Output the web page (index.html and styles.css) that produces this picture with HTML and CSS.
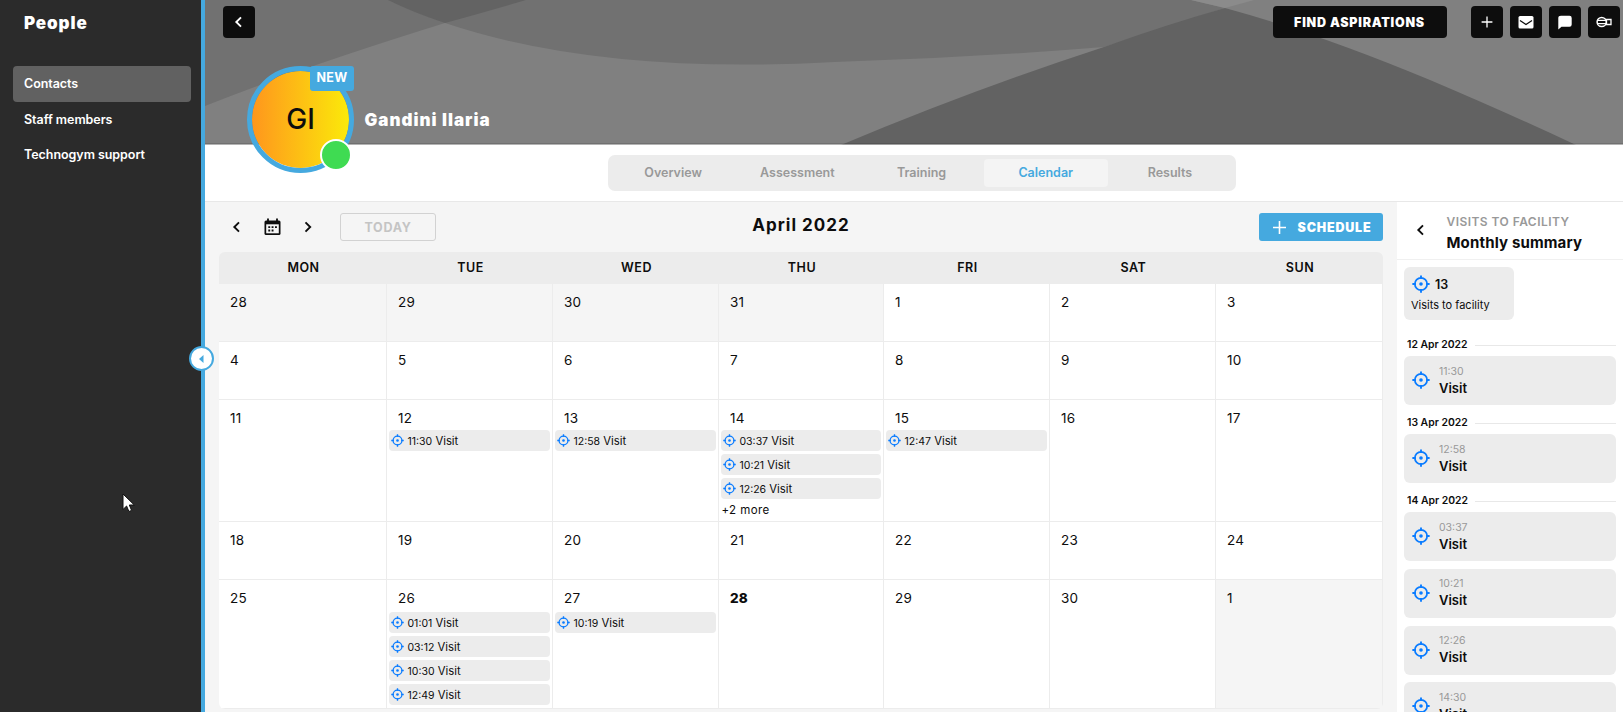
FILE: index.html
```html
<!DOCTYPE html>
<html lang="en">
<head>
<meta charset="utf-8">
<title>People - Calendar</title>
<link rel="stylesheet" href="styles.css">
</head>
<body>
<svg class="defs" width="0" height="0">
  <symbol id="target" viewBox="0 0 24 24"><circle cx="12" cy="12" r="8.2" fill="none" stroke="currentColor" stroke-width="2.3"/><circle cx="12" cy="12" r="2.4" fill="currentColor"/><path d="M12 .5v4.700M12 18.800v4.700M.5 12h4.700M18.800 12h4.700" stroke="currentColor" stroke-width="2.5"/></symbol>
  <symbol id="left" viewBox="0 0 12 12"><path d="M8 1.300 3.300 6l4.700 4.700" fill="none" stroke="currentColor" stroke-width="1.900"/></symbol>
  <symbol id="right" viewBox="0 0 12 12"><path d="M3.500 1.300 8.200 6l-4.700 4.700" fill="none" stroke="currentColor" stroke-width="1.900"/></symbol>
</svg>
<div class="app">
  <aside class="sidebar">
    <h1 class="brand"><span>People</span></h1>
    <nav class="menu">
      <a class="menu-item active">Contacts</a>
      <a class="menu-item">Staff members</a>
      <a class="menu-item">Technogym support</a>
    </nav>
    <div class="toggle"><svg width="5" height="8" viewBox="0 0 5 8"><path d="M4.500 0v8L0 4z" fill="#45a9df"/></svg></div>
    <svg class="cursor" width="13" height="20" viewBox="0 0 13 20"><path d="M1 1v15.500l3.600-3.500 2.300 5.500 2.700-1.100-2.300-5.400h5z" fill="#fff" stroke="#111" stroke-width="1"/></svg>
  </aside>
  <main class="main">
    <header class="banner">
      <svg class="banner-art" width="1418" height="145" viewBox="205 0 1418 145">
        <path d="M205 0h1418v145H205z" fill="#808080"/>
        <path d="M205 0H526Q485 12 445 23Q300 68 205 106z" fill="#717171"/>
        <path d="M388 0Q412 12 445 23Q600 75 835 62Q970 58 1104 47L1225 8L1191 0z" fill="#717171"/>
        <path d="M388 0H526Q485 12 445 23Q412 12 388 0z" fill="#636363"/>
        <path d="M841 145Q972 90 1104 47Q1165 25 1225 8Q1320 34 1430 80Q1510 114 1576 145z" fill="#626262"/>
        <path d="M1191 0h63l-29 8z" fill="#8b8b8b"/>
        <path d="M205 143.500h1418" stroke="#000" stroke-opacity=".12"/>
        <path d="M205 144.500h1418" stroke="#fff" stroke-opacity=".4"/>
      </svg>
      <div class="topbar">
        <button class="sq"><svg width="12" height="12"><use href="#left"/></svg></button>
        <div class="actions">
          <button class="find"><span>FIND ASPIRATIONS</span></button>
          <button class="sq"><svg width="12" height="12" viewBox="0 0 12 12"><path d="M6 .6v10.800M.6 6h10.800" stroke="#fff" stroke-width="1.300"/></svg></button>
          <button class="sq"><svg width="16" height="14" viewBox="0 0 16 14"><rect x=".5" y="1" width="15" height="12.500" rx="1.500" fill="#fff"/><path d="M2 5.500 8 9.500l6-4" fill="none" stroke="#0d0d0d" stroke-width="1.300"/></svg></button>
          <button class="sq"><svg width="14" height="15" viewBox="0 0 14 15"><path d="M3 .8h8.500Q13.700.8 13.700 3v6.500q0 2.200-2.200 2.200H3.500L.3 14.500V3Q.3.800 3 .8z" fill="#fff"/></svg></button>
          <button class="sq"><svg width="16" height="12" viewBox="0 0 16 12"><circle cx="5.700" cy="6" r="4.600" fill="none" stroke="#fff" stroke-width="1.500"/><path d="M1 4.300h9M1 7.700h9M10.500 3.500h4.500v5h-4.500z" fill="none" stroke="#fff" stroke-width="1.300"/></svg></button>
        </div>
      </div>
      <div class="profile">
        <div class="avatar"><span class="initials">GI</span><span class="badge">NEW</span><span class="status"></span></div>
        <h2 class="name">Gandini Ilaria</h2>
      </div>
    </header>
    <div class="tabs-row">
      <nav class="tabs">
        <a class="tab">Overview</a><a class="tab">Assessment</a><a class="tab">Training</a><a class="tab on">Calendar</a><a class="tab">Results</a>
      </nav>
    </div>
    <div class="content">
      <section class="cal">
        <div class="toolbar">
          <div class="nav">
            <svg width="12" height="12"><use href="#left"/></svg>
            <svg class="cal-icon" width="17" height="18" viewBox="0 0 17 18"><path d="M2 2.500h13q1.500 0 1.500 1.500v11.500q0 1.500-1.500 1.500H2Q.5 17 .5 15.500V4Q.5 2.500 2 2.500z" fill="#0d0d0d"/><path d="M2.200 6.300h12.600v9H2.200z" fill="#f5f5f5"/><path d="M4 .5v3M13 .5v3" stroke="#0d0d0d" stroke-width="1.800"/><path d="M4.300 9.200h1.900M7.600 9.200h1.900M11 9.200h1.900M4.300 12.500h1.900M7.600 12.500h1.900" stroke="#0d0d0d" stroke-width="1.800"/></svg>
            <svg width="12" height="12"><use href="#right"/></svg>
            <button class="today">TODAY</button>
          </div>
          <h3 class="month">April 2022</h3>
          <button class="schedule"><svg width="13" height="13" viewBox="0 0 13 13"><path d="M6.500 0v13M0 6.500h13" stroke="#fff" stroke-width="1.600"/></svg><span>SCHEDULE</span></button>
        </div>
        <div class="grid">
          <div class="dow">MON</div><div class="dow">TUE</div><div class="dow">WED</div><div class="dow">THU</div><div class="dow">FRI</div><div class="dow">SAT</div><div class="dow">SUN</div>

          <div class="day off"><b>28</b></div><div class="day off"><b>29</b></div><div class="day off"><b>30</b></div><div class="day off"><b>31</b></div><div class="day"><b>1</b></div><div class="day"><b>2</b></div><div class="day"><b>3</b></div>

          <div class="day"><b>4</b></div><div class="day"><b>5</b></div><div class="day"><b>6</b></div><div class="day"><b>7</b></div><div class="day"><b>8</b></div><div class="day"><b>9</b></div><div class="day"><b>10</b></div>

          <div class="day"><b>11</b></div>
          <div class="day"><b>12</b><div class="ev"><svg><use href="#target"/></svg><i>11:30</i>Visit</div></div>
          <div class="day"><b>13</b><div class="ev"><svg><use href="#target"/></svg><i>12:58</i>Visit</div></div>
          <div class="day"><b>14</b><div class="ev"><svg><use href="#target"/></svg><i>03:37</i>Visit</div><div class="ev"><svg><use href="#target"/></svg><i>10:21</i>Visit</div><div class="ev"><svg><use href="#target"/></svg><i>12:26</i>Visit</div><div class="more">+2 more</div></div>
          <div class="day"><b>15</b><div class="ev"><svg><use href="#target"/></svg><i>12:47</i>Visit</div></div>
          <div class="day"><b>16</b></div><div class="day"><b>17</b></div>

          <div class="day"><b>18</b></div><div class="day"><b>19</b></div><div class="day"><b>20</b></div><div class="day"><b>21</b></div><div class="day"><b>22</b></div><div class="day"><b>23</b></div><div class="day"><b>24</b></div>

          <div class="day last"><b>25</b></div>
          <div class="day last"><b>26</b><div class="ev"><svg><use href="#target"/></svg><i>01:01</i>Visit</div><div class="ev"><svg><use href="#target"/></svg><i>03:12</i>Visit</div><div class="ev"><svg><use href="#target"/></svg><i>10:30</i>Visit</div><div class="ev"><svg><use href="#target"/></svg><i>12:49</i>Visit</div></div>
          <div class="day last"><b>27</b><div class="ev"><svg><use href="#target"/></svg><i>10:19</i>Visit</div></div>
          <div class="day last now"><b>28</b></div><div class="day last"><b>29</b></div><div class="day last"><b>30</b></div><div class="day last off"><b>1</b></div>
        </div>
      </section>
      <aside class="panel">
        <div class="panel-head">
          <svg width="12" height="12"><use href="#left"/></svg>
          <div><div class="eyebrow">VISITS TO FACILITY</div><div class="title">Monthly summary</div></div>
        </div>
        <div class="list">
          <div class="stat"><div class="stat-top"><svg><use href="#target"/></svg><b>13</b></div><div class="stat-label">Visits to facility</div></div>
          <div class="date">12 Apr 2022</div>
          <div class="card"><svg><use href="#target"/></svg><div><div class="time">11:30</div><div class="what">Visit</div></div></div>
          <div class="date">13 Apr 2022</div>
          <div class="card"><svg><use href="#target"/></svg><div><div class="time">12:58</div><div class="what">Visit</div></div></div>
          <div class="date">14 Apr 2022</div>
          <div class="card"><svg><use href="#target"/></svg><div><div class="time">03:37</div><div class="what">Visit</div></div></div>
          <div class="card"><svg><use href="#target"/></svg><div><div class="time">10:21</div><div class="what">Visit</div></div></div>
          <div class="card"><svg><use href="#target"/></svg><div><div class="time">12:26</div><div class="what">Visit</div></div></div>
          <div class="card"><svg><use href="#target"/></svg><div><div class="time">14:30</div><div class="what">Visit</div></div></div>
        </div>
      </aside>
    </div>
  </main>
</div>
</body>
</html>
```
FILE: styles.css
```css
* { box-sizing: border-box; margin: 0; padding: 0; }
body { font-family: Inter, "Liberation Sans", sans-serif; color: #0d0d0d; overflow: hidden; height: 712px; }
button { border: 0; font: inherit; }
svg { display: block; flex: none; }
.defs { position: absolute; }
.app { display: flex; height: 712px; }

.sidebar { position: relative; width: 205px; flex: none; background: #2b2b2b; border-right: 4px solid #45a9df; color: #fff; z-index: 2; }
.brand { height: 66px; padding: 12px 0 0 24px; font-size: 17px; line-height: 22px; font-weight: 900; letter-spacing: .9px; }
.menu { padding-left: 13px; }
.menu-item { display: flex; align-items: center; width: 178px; height: 35.600px; padding: 1px 0 0 11px; border-radius: 4px; font-size: 12.500px; line-height: 18px; font-weight: 600; letter-spacing: -.05px; }
.menu-item.active { background: #616161; }
.toggle { position: absolute; left: 189px; top: 346px; width: 25px; height: 25px; border-radius: 50%; background: #fff; border: 2px solid #45a9df; display: flex; align-items: center; justify-content: center; }
.cursor { position: absolute; left: 122px; top: 493px; }

.main { flex: 1; min-width: 0; display: flex; flex-direction: column; }
.banner { position: relative; height: 145px; flex: none; z-index: 1; }
.banner-art { position: absolute; left: 0; top: 0; }
.topbar { position: relative; display: flex; justify-content: space-between; padding: 6px 3px 0 18px; height: 60px; }
.actions { display: flex; gap: 7px; }
.sq { width: 32px; height: 32px; border-radius: 4px; background: #0d0d0d; color: #fff; display: flex; align-items: center; justify-content: center; }
.find { width: 174px; height: 32px; margin-right: 17.500px; border-radius: 4px; background: #0d0d0d; color: #fff; font-size: 12.500px; font-weight: 900; letter-spacing: .75px; }
.profile { position: relative; display: flex; padding: 6px 0 0 42px; }
.avatar { position: relative; width: 107px; height: 107px; border-radius: 50%; border: 5.500px solid #45a9df; background: linear-gradient(90deg, #ff921e, #fbee09) border-box; background-clip: padding-box; display: flex; align-items: center; justify-content: center; }
.initials { font-size: 28px; font-weight: 500; line-height: 30px; padding-bottom: 1px; }
.badge { position: absolute; right: -5px; top: -5px; width: 44px; height: 25px; padding-bottom: 3px; border-radius: 3px; background: #45a9df; color: #fff; font-size: 12.500px; font-weight: 700; letter-spacing: .3px; display: flex; align-items: center; justify-content: center; }
.status { position: absolute; left: 67.500px; top: 67.500px; width: 32px; height: 32px; border-radius: 50%; background: #3fdb52; border: 2px solid #fff; }
.name { padding: 43px 0 0 10.500px; font-size: 17px; line-height: 22px; font-weight: 900; color: #fff; letter-spacing: 1px; }

.tabs-row { height: 57px; flex: none; background: #fff; border-bottom: 1px solid #e8e8e8; display: flex; padding: 10px 0 0 402.500px; }
.tabs { display: flex; width: 628px; height: 36px; padding: 4px 3.500px; border-radius: 7px; background: #ececec; }
.tab { flex: 1; border-radius: 4px; display: flex; align-items: center; justify-content: center; padding-bottom: 1px; font-size: 12.500px; line-height: 18px; font-weight: 600; color: #999; }
.tab.on { background: #f4f4f4; color: #45a9df; }

.content { flex: 1; min-height: 0; display: flex; background: #f5f5f5; }
.cal { width: 1192px; flex: none; padding: 11px 14px 0; }
.toolbar { display: grid; grid-template-columns: 1fr auto 1fr; height: 39px; align-items: start; }
.nav { display: flex; align-items: center; height: 28px; padding-left: 12px; }
.cal-icon { margin: 0 21px; }
.today { width: 96px; height: 28px; margin-left: 26px; border: 1px solid #d2d2d2; border-radius: 3px; background: transparent; color: #c4c4c4; font-size: 12.500px; font-weight: 700; letter-spacing: .7px; }
.month { line-height: 25px; font-size: 17px; font-weight: 700; letter-spacing: 1px; }
.schedule { justify-self: end; width: 124.500px; height: 28px; border-radius: 3px; background: #45a9df; color: #fff; display: flex; align-items: center; gap: 12px; padding-left: 14px; font-size: 12.500px; font-weight: 900; letter-spacing: .8px; }
.grid { display: grid; width: 1164px; grid-template-columns: 168px 166px 166px 165px 166px 166px 167px; grid-template-rows: 32px 58px 58px 122px 58px 129px; border-radius: 6px; overflow: hidden; }
.dow { background: #ececec; display: flex; align-items: center; justify-content: center; padding: 0 0 2px 1px; font-size: 12.500px; font-weight: 600; letter-spacing: .5px; }
.day { background: #fff; border-right: 1px solid #ececec; border-bottom: 1px solid #ececec; padding: 0 2px 0 1.500px; overflow: hidden; }
.day.off { background: #f5f5f5; }
.day b { display: block; height: 30px; padding: 9px 0 0 9.500px; font-size: 13.500px; line-height: 18px; font-weight: 400; letter-spacing: .2px; }
.day.now b { font-weight: 800; }
.day.last b { height: 32px; }
.ev { display: flex; align-items: center; height: 21px; margin-bottom: 3px; padding: 1px 0 0 2.500px; border-radius: 4px; background: #ececec; font-size: 11.300px; }
.ev svg { width: 13px; height: 13px; margin: -1px 3.500px 0 0; color: #0a7cff; }
.ev i { font-style: normal; font-size: 10.500px; margin-right: 3.200px; }
.more { font-size: 11.500px; line-height: 16px; padding-left: 1px; letter-spacing: .4px; }

.panel { flex: 1; background: #fff; overflow: hidden; }
.panel-head { height: 58px; border-bottom: 1px solid #f0f0f0; display: flex; padding: 11px 0 0 18px; gap: 19.500px; }
.panel-head svg { margin-top: 11px; }
.eyebrow { font-size: 12px; line-height: 18px; font-weight: 600; color: #999; letter-spacing: .45px; }
.title { font-size: 15px; line-height: 23px; font-weight: 700; letter-spacing: .15px; }
.list { padding: 7px 7px 0; }
.stat { width: 110px; height: 53px; margin-bottom: 7px; border-radius: 6px; background: #ececec; padding: 8px 7px 0; }
.stat-top { display: flex; align-items: center; height: 18px; gap: 5px; font-size: 12.500px; padding-left: 1px; }
.stat svg, .card svg { width: 18px; height: 18px; color: #0a7cff; }
.stat-top b { font-weight: 600; }
.stat-label { font-size: 11px; line-height: 16px; margin-top: 4px; }
.date { display: flex; align-items: center; gap: 7px; height: 29px; padding: 5px 0 0 3px; font-size: 10.400px; font-weight: 600; }
.date::after { content: ""; flex: 1; height: 1px; margin-top: 2px; background: #e8e8e8; }
.card { display: flex; align-items: center; height: 49px; padding: 0 0 1px 8px; gap: 9px; border-radius: 6px; background: #ececec; }
.card + .card { margin-top: 7.800px; }
.time { font-size: 10.500px; line-height: 15px; color: #999; }
.what { font-size: 13px; line-height: 18px; font-weight: 600; }
```
